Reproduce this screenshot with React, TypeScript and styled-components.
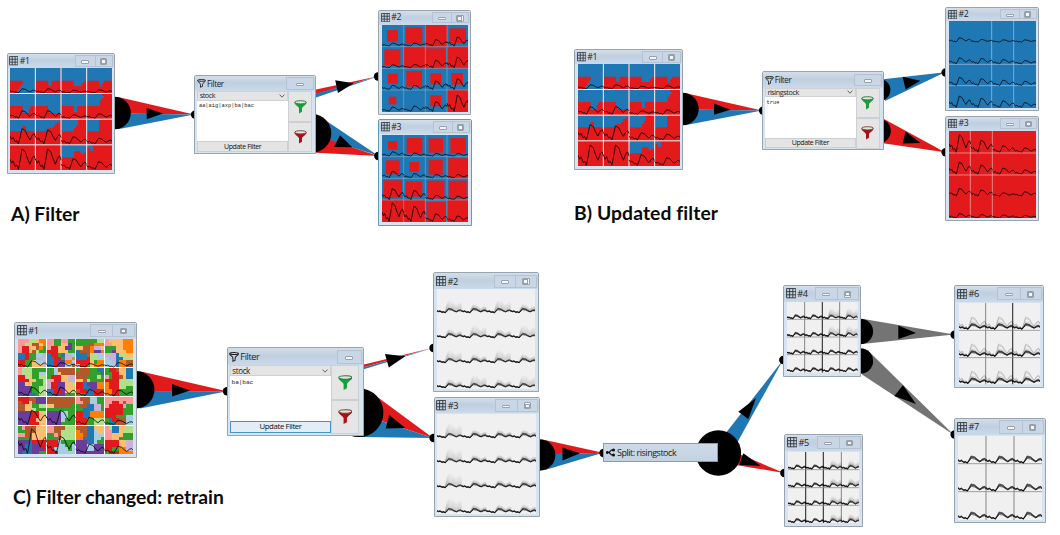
import React from "react";
import styled, { createGlobalStyle } from "styled-components";

const Global = createGlobalStyle`
  body { margin: 0; background: #fff; }
  * { box-sizing: border-box; }
`;

const RED = "#e31a1c";
const BLUE = "#1f78b4";
const GRAY = "#747474";

const Canvas = styled.main`
  position: relative;
  width: 1060px;
  height: 535px;
  overflow: hidden;
  background: #fff;
  font-family: "Open Sans", "Noto Sans", sans-serif;
  color: #222;
`;

const Links = styled.svg`
  position: absolute;
  inset: 0;
`;

const Caption = styled.h2<{ $x: number; $y: number; $ls?: number }>`
  position: absolute;
  left: ${(p) => p.$x}px;
  top: ${(p) => p.$y}px;
  margin: 0;
  font: 700 19.3px/22px Lato, sans-serif;
  letter-spacing: ${(p) => p.$ls ?? 0}px;
  color: #0a0a0a;
  white-space: nowrap;
`;

const Frame = styled.section<{ $x: number; $y: number; $w: number; $h: number; $active?: boolean }>`
  position: absolute;
  left: ${(p) => p.$x}px;
  top: ${(p) => p.$y}px;
  width: ${(p) => p.$w}px;
  height: ${(p) => p.$h}px;
  display: flex;
  flex-direction: column;
  border: 1px solid ${(p) => (p.$active ? "#5d9dbb" : "#9aa4ae")};
  border-radius: 2px 2px 0 0;
  background: #d6e4f1;
`;

const TitleBar = styled.header<{ $h: number }>`
  flex: none;
  height: ${(p) => p.$h}px;
  display: flex;
  align-items: center;
  padding-left: 1.6px;
  background: linear-gradient(#d3dee9, #c0cfdf 45%, #cbdaea);
`;

const Title = styled.span<{ $size: number }>`
  flex: 1;
  margin-left: 1.2px;
  font-size: ${(p) => p.$size}px;
  line-height: 1;
  letter-spacing: -0.4px;
  white-space: nowrap;
`;

const WinButton = styled.span<{ $w: number }>`
  width: ${(p) => p.$w}px;
  height: calc(100% - 2.4px);
  display: flex;
  align-items: center;
  justify-content: center;
  border: 1px solid #b4c2d1;
  border-right-width: 0;
  background: #c8d6e5;
  &:last-child { border-right-width: 1px; margin-right: 1px; }
`;

const MinGlyph = styled.i`
  width: 8px;
  height: 3.4px;
  margin-top: 2px;
  border: 0.8px solid #98a1aa;
  border-radius: 1px;
  background: #f4f7fa;
`;

const MaxGlyph = styled.i`
  width: 7.4px;
  height: 6.8px;
  margin-top: 1px;
  display: flex;
  align-items: center;
  justify-content: center;
  border: 1px solid #98a1aa;
  border-radius: 1px;
  background: #f4f7fa;
  &::after { content: ""; width: 3px; height: 2.6px; border: 1px solid #98a1aa; }
`;

const GridIcon = ({ size = 9 }: { size?: number }) => (
  <svg width={size} height={size} viewBox="0 0 9 9" fill="none" stroke="#30363c" strokeWidth=".8">
    <path d="M.5.5h8v8h-8zM3.1.5v8M5.9.5v8M.5 3.1h8M.5 5.9h8" />
  </svg>
);

type WinProps = {
  x: number; y: number; w: number; h: number; name: string; bar: number; buttons?: [number, number];
  plot: [number, number, number, number]; active?: boolean; children: React.ReactNode;
};

const Plot = styled.svg<{ $ml: number; $mt: number; $w: number; $h: number }>`
  display: block;
  flex: none;
  margin: ${(p) => p.$mt}px 0 0 ${(p) => p.$ml}px;
  width: ${(p) => p.$w}px;
  height: ${(p) => p.$h}px;
`;

/* plot: absolute left, top, width and height of the chart; its viewBox has three units per pixel */
const GridWindow = ({ x, y, w, h, name, bar, buttons = [19, 18], plot, active, children }: WinProps) => (
  <Frame $x={x} $y={y} $w={w} $h={h} $active={active}>
    <TitleBar $h={bar}>
      <GridIcon size={bar > 15 ? 10.4 : 9.4} />
      <Title $size={bar > 15 ? 9.2 : 8.700}>{name}</Title>
      <WinButton $w={buttons[0]}><MinGlyph /></WinButton>
      <WinButton $w={buttons[1]}><MaxGlyph /></WinButton>
    </TitleBar>
    <Plot
      $ml={plot[0] - x - 1}
      $mt={plot[1] - y - 1 - bar}
      $w={plot[2]}
      $h={plot[3]}
      viewBox={`0 0 ${plot[2] * 3} ${plot[3] * 3}`}
    >
      {children}
    </Plot>
  </Frame>
);

const PROFILE: [number, number][] = [
  [0, 0.5], [0.06, 0.3], [0.12, 0.42], [0.2, 0.14], [0.27, 0.2], [0.33, 0], [0.4, 0.45], [0.47, 1],
  [0.6, 0.86], [0.68, 0.55], [0.78, 0.25], [0.88, 0.58], [0.95, 0.66], [1, 0.45],
];

const wave = (x: number, y: number, w: number, h: number, amp: number, peak = 1) =>
  "M" + PROFILE.map(([px, v], i) => {
    const k = i >= 6 ? Math.pow(v, 1 / peak) * peak : v;
    return `${(x + px * w).toFixed(1)} ${(y + h - 2 - k * amp * h).toFixed(1)}`;
  }).join("L");

const Curves = ({ w, h, amps }: { w: number; h: number; amps: number[][] }) => {
  const ch = h / amps.length;
  return (
    <g fill="none" stroke="#000" strokeOpacity=".85" strokeWidth="2.700">
      {amps.map((row, r) => row.map((a, c) => (
        <path key={`${r}-${c}`} d={wave((c * w) / row.length, r * ch, w / row.length, ch, a)} />
      )))}
    </g>
  );
};

const Lines = ({ w, h, xs, ys, color = "#e8eef4", sw = 2 }: { w: number; h: number; xs: number[]; ys: number[]; color?: string; sw?: number }) => (
  <path d={xs.map((x) => `M${x} 0V${h}`).join("") + ys.map((y) => `M0 ${y}H${w}`).join("")} stroke={color} strokeWidth={sw} />
);

const REGIONS = [
  "M0 0H75V75H22V66H28V56H34V48H39V38H0Z",
  "M77 0H152V38H125V54H115V38H77Z",
  "M154 0H229V38H222V46H215V54H191V38H154Z",
  "M231 0H306V38H281V46H275V56H269V38H231Z",
  "M0 78H75V114H61V122H56V136H38V114H0Z",
  "M77 78H152V136H118V124H114V114H77Z",
  "M154 78H229V114H201V132H191V114H154Z",
  "M231 78H277V84H282V90H275V98H269V114H231Z",
  "M0 155H75V190H48V174H38V190H0Z",
  "M77 155H152V158H146V164H136V174H130V180H115V190H77Z",
  "M154 155H204V172H198V180H192V190H154Z",
  "M231 155H267V190H231Z",
  "M154 232H229V254H222V258H212V250H192V268H154Z",
  "M231 232H248V238H250V248H240V240H231Z",
];

const Regions = () => (
  <>
    <rect width="306" height="306" fill={RED} />
    <path d={REGIONS.join("")} fill={BLUE} />
    <Lines w={306} h={306} xs={[76, 153, 230]} ys={[76.5, 153.5, 230.5]} color="#f3f6f9" sw={3} />
    <Curves w={306} h={306} amps={[[0.16, 0.16, 0.1, 0.12], [0.3, 0.3, 0.14, 0.18], [0.6, 0.55, 0.28, 0.22], [0.8, 0.8, 0.42, 0.3]]} />
  </>
);

const Squares = ({ squares, amps }: { squares: number[][]; amps: number[][] }) => (
  <>
    <rect width="261" height="261" fill={BLUE} />
    {squares.map(([x, y, w, h], i) => <rect key={i} x={x} y={y} width={w} height={h} fill={RED} />)}
    <Lines w={261} h={261} xs={[65, 130, 195]} ys={[65, 130, 195]} color="#9fb9d8" sw={1.4} />
    <Curves w={260} h={261} amps={amps} />
  </>
);

const MIX: Record<string, string> = {
  r: "#e31a1c", b: "#1f78b4", g: "#33a02c", l: "#b2df8a", p: "#fb9a99", c: "#a6cee3",
  v: "#6a3d9a", m: "#cab2d6", o: "#ff7f00", y: "#fdbf6f", n: "#b15928",
};

const MOSAIC: string[][] = [
  ["pppllyoo|pplynnyo|prryynog|prrynlgg|bbrggccm|bbrggmmc|rrggyccm|rrggyyym",
   "ppggppgg|ppggyyvg|prryyvvg|rrryyygg|brrgbmmc|bbrrgmmo|bbrvvooc|bbrvvccn",
   "ggggggll|gggnnooo|yynnommy|bnnnovvo|bbbnllcc|bbbrllcc|rrrrygoo|mrrgyooo",
   "pyyyyooo|ppyyyooo|gggyyooo|ggvyyyoo|mmmbllyy|cmmbblll|ccmboonn|cccboonn"],
  ["plllgggg|plllggcc|rrlyggll|rrryyggl|vvyygggl|vvvvggll|vvvvggll|vvvbbgll",
   "ggcnnnnn|ggcynnnn|grrryymm|pprryymm|mrrvvyyl|mrrvvyyy|bbrrvyyl|bbvvvggg",
   "gnnnggbb|nnnngggb|nnnggglg|yynlgggg|rrbvvvoo|rrbbvvoo|nrrbbrrr|nnbbbrrr",
   "grrnyybb|ggrryybb|pgrrnybb|rrrrllll|orrrllll|orrrllgg|oorrgggg|oorrgggg"],
  ["rrrnnvvv|nrrynvvv|nnyyggll|nnyylggg|vvvvrryl|vvvvrryy|vvvrryyy|vvvrrryy",
   "nnnnnnnn|nnnnnnnn|yynnnnng|gggggggg|vvvvccgg|vvvvccgg|vvvvcggg|vvvvgggg",
   "pnnnccgg|ppnnccgg|gnnbbmmg|ggbbbmmg|rrbboooo|rrbboooo|rrrgglll|rrrgglll",
   "pppppppp|pprrpnpp|prrrrmgg|rrrrrggg|rrrrrggg|rrrgggcc|gbrrnncc|gbbnnncc"],
  ["gpnnnyyy|ggnnnyyy|ppnnyyyy|gggnyyyy|vvvbrrrr|vvbbvvrr|vvbbvvvr|vbbbvvgg",
   "ppnnnlll|ppnnllll|ggpnllll|gggnllll|rrrcgggg|rrrccggc|rrccccgc|rrrccccc",
   "nnnbbyyy|onnbbcyy|oonbbccc|oobbbccg|vvvbbcgg|vvvccvvv|vvvccvvv|vvvvvvvv",
   "plbbyyll|ppbbylll|ppyyyggg|ppyygggg|rrrryymm|rrrryymm|rrggoomm|grrroooo"],
];

const Mosaic = () => {
  const s = 84 / 8;
  return (
    <>
      <rect width="345" height="345" fill="#fff" />
      <g shapeRendering="crispEdges">
        {MOSAIC.map((row, r) => row.map((cell, c) => cell.split("|").map((line, j) => line.split("").map((k, i) => (
          <rect key={`${r}${c}${j}${i}`} x={c * 87 + i * s} y={r * 87 + j * s} width={s + 0.4} height={s + 0.4} fill={MIX[k]} />
        )))))}
      </g>
      <Curves w={345} h={345} amps={[[0.22, 0.16, 0.12, 0.16], [0.3, 0.3, 0.22, 0.2], [0.5, 0.5, 0.25, 0.15], [0.85, 0.6, 0.32, 0.25]]} />
    </>
  );
};

type DensityProps = {
  w: number; h: number; cols: number; rows: number; xs: number[]; ys: number[];
  amp: number; base: number; haze: (r: number, c: number) => number; dark?: number[]; outliers?: number[];
};

const Density = ({ w, h, cols, rows, xs, ys, amp, base, haze, dark = [], outliers = [] }: DensityProps) => {
  const cw = w / cols;
  const ch = h / rows;
  const out: React.ReactNode[] = [];
  for (let r = 0; r < rows; r++) {
    for (let c = 0; c < cols; c++) {
      const hz = haze(r, c);
      for (let k = 1; k <= 8; k++) {
        out.push(
          <path key={`h${r}-${c}-${k}`} d={wave(c * cw, r * ch, cw, ch - base, amp * (1 + k * 0.03), 1 + k * 0.16 * hz)}
            strokeOpacity={0.1 - k * 0.009} strokeWidth="4" />,
        );
      }
      outliers.forEach((k) => out.push(
        <path key={`o${r}-${c}-${k}`} d={wave(c * cw, r * ch, cw, ch - base, amp * k)} strokeOpacity=".2" strokeWidth="2.2" />,
      ));
      [0.8, 1, 1.2].forEach((k) => out.push(
        <path key={`m${r}-${c}-${k}`} d={wave(c * cw, r * ch, cw, ch - base, amp * k)} strokeOpacity=".62" strokeWidth="2.700" />,
      ));
    }
  }
  return (
    <>
      <rect width={w} height={h} fill="#f0f0f0" />
      <Lines w={w} h={h} xs={xs} ys={[]} color="#858585" sw={3} />
      <Lines w={w} h={h} xs={dark} ys={[]} color="#333" sw={3.4} />
      <Lines w={w} h={h} xs={[]} ys={ys} color="#8b8b8b" sw={2.4} />
      <g fill="none" stroke="#000" strokeLinejoin="round">{out}</g>
    </>
  );
};

/* filter node: every measure is multiplied by the node's scale s */
const FilterBody = styled.div<{ $s: number }>`
  flex: 1;
  min-height: 0;
  display: grid;
  grid-template-columns: ${(p) => 90.7 * p.$s}px ${(p) => 24.4 * p.$s}px;
  padding: 0 0 0 ${(p) => 2 * p.$s}px;
`;

const Fields = styled.div<{ $s: number }>`
  display: flex;
  flex-direction: column;
  height: ${(p) => 60.6 * p.$s}px;
`;

const Combo = styled.div<{ $s: number }>`
  height: ${(p) => 9.6 * p.$s}px;
  display: flex;
  align-items: center;
  justify-content: space-between;
  padding: 0 ${(p) => 2 * p.$s}px 0 ${(p) => 1.4 * p.$s}px;
  border: 0.8px solid #cfd1d3;
  background: #e4e4e4;
  font-size: ${(p) => 7.2 * p.$s}px;
  line-height: 1;
  letter-spacing: -0.4px;
`;

const Query = styled.div<{ $s: number }>`
  flex: 1;
  padding: ${(p) => 3.6 * p.$s}px ${(p) => 1.6 * p.$s}px;
  background: #fff;
  font: ${(p) => 5.4 * p.$s}px/1 "Liberation Mono", monospace;
  color: #222;
`;

const UpdateButton = styled.button<{ $s: number; $focus?: boolean }>`
  height: ${(p) => 10.6 * p.$s}px;
  margin: 0;
  padding: 0;
  border: ${(p) => (p.$focus ? "1.4px solid #4a93c9" : "1px solid #cccfd2")};
  background: ${(p) => (p.$focus ? "#e3edf6" : "#e4e4e4")};
  font: ${(p) => 7 * p.$s}px/1 "Open Sans", sans-serif;
  letter-spacing: -0.38px;
  color: #111;
`;

const FunnelColumn = styled.div<{ $s: number }>`
  display: flex;
  flex-direction: column;
  height: ${(p) => 61 * p.$s}px;
`;

const FunnelButton = styled.div`
  flex: 1;
  display: flex;
  align-items: center;
  justify-content: center;
  border: 1px solid #cdd0d3;
  background: #e5e5e5;
`;

const Funnel = ({ color, dark, s }: { color: string; dark: string; s: number }) => (
  <svg width={13 * s} height={14 * s} viewBox="0 0 13 14">
    <path d="M.4 2.4C.4 4.6 4.2 6 5 8v5.4l3-1.6V8c.8-2 4.6-3.400 4.600-5.600z" fill={color} />
    <ellipse cx="6.500" cy="2.300" rx="5.800" ry="1.600" fill="#dfe6df" stroke={dark} strokeWidth=".9" />
  </svg>
);

const FunnelOutline = ({ s }: { s: number }) => (
  <svg width={9 * s} height={9 * s} viewBox="0 0 9 9" fill="none" stroke="#222" strokeWidth=".9">
    <path d="M.6 1.500C.6 3 3.500 4 3.500 5.300v3l2-1V5.300C5.500 4 8.400 3 8.400 1.500" />
    <ellipse cx="4.500" cy="1.400" rx="3.900" ry=".9" />
  </svg>
);

const Chevron = () => (
  <svg width="6" height="4" viewBox="0 0 6 4" fill="none" stroke="#555" strokeWidth=".9"><path d="M.6.6 3 3.200 5.400.6" /></svg>
);

const FilterWindow = ({ x, y, w, h, s, field, query, focus }: {
  x: number; y: number; w: number; h: number; s: number; field: string; query: string; focus?: boolean;
}) => (
  <Frame $x={x} $y={y} $w={w} $h={h}>
    <TitleBar $h={15.3 * s}>
      <FunnelOutline s={s} />
      <Title $size={8.1 * s}>Filter</Title>
      <WinButton $w={28 * (s > 1 ? 0.87 : 1)}><MinGlyph /></WinButton>
    </TitleBar>
    <FilterBody $s={s}>
      <Fields $s={s}>
        <Combo $s={s}>{field}<Chevron /></Combo>
        <Query $s={s}>{query}</Query>
        <UpdateButton $s={s} $focus={focus}>Update Filter</UpdateButton>
      </Fields>
      <FunnelColumn $s={s}>
        <FunnelButton><Funnel color="#16a03c" dark="#27703b" s={s} /></FunnelButton>
        <FunnelButton><Funnel color="#a81216" dark="#7a3a33" s={s} /></FunnelButton>
      </FunnelColumn>
    </FilterBody>
  </Frame>
);

const SplitNode = styled.div`
  position: absolute;
  left: 603px;
  top: 443px;
  width: 115px;
  height: 19px;
  display: flex;
  align-items: center;
  gap: 2px;
  padding-left: 2px;
  border: 1px solid #8f9aa5;
  background: linear-gradient(#cddae7, #c3d2e2);
  font-size: 9px;
  line-height: 1;
  letter-spacing: -0.48px;
`;

const FLOWS: [string, string][] = [
  ["118,97 194,114.600 115,113.600", RED],
  ["115,113.600 194,114.600 118,129.300", BLUE],
  ["316,89.500 378,76.300 316,94", RED],
  ["316,93.500 378,76.500 316,97.500", BLUE],
  ["322,118 378,155.500 316,136", BLUE],
  ["316,135 378,156 316,152.700", RED],
  ["685,93 762,110.600 683,109.600", RED],
  ["683,109.600 762,110.600 685,125.300", BLUE],
  ["883,79.200 945,72.300 885,101", BLUE],
  ["884,119 945,152.300 883,143.300", RED],
  ["140,371.300 227,391.200 136,391", RED],
  ["136,391 227,391.200 140,408.500", BLUE],
  ["363,364.800 433,347.700 363,367.500", RED],
  ["363,367.500 433,348 363,369.500", BLUE],
  ["372,393 433,438 360,414", RED],
  ["360,414 433,438 362,437", BLUE],
  ["545,440 603,452.800 540,454.500", RED],
  ["540,454.500 603,452.800 545,470", BLUE],
  ["718,443 783,360 737,443", BLUE],
  ["730,450 784,473 730,464", RED],
  ["862,318.700 954,334.600 862,344", GRAY],
  ["868,350.500 954,435 862,374.500", GRAY],
];

const HUBS: [number, number, number][] = [
  [114.500, 113, 16.300], [312, 133.300, 19.300], [682.400, 109, 16.300], [879.500, 90, 10.900], [878.500, 131, 12.300],
  [135.800, 389.700, 18.700], [359, 412.700, 24.400], [539.700, 455, 15.700], [718.400, 453, 22.700],
  [860.400, 331.500, 12.700], [860.400, 361, 12.700],
];

const PORTS: [number, number][] = [
  [195, 114.600], [378, 76.500], [378.300, 156], [763, 110.600], [945.600, 72.500], [945.600, 152.300],
  [227, 391.200], [433.500, 348], [433.500, 438], [603.500, 453], [783.300, 360], [784.300, 473], [954.600, 334.700], [954.600, 434.500],
];

const ARROWS = [
  "146.700,108 146.700,119.300 163,113.500", "335.200,80.300 353.600,83.300 338,93", "340,135.300 352.300,147.300 334,147",
  "714,103.500 714,114.800 730.300,109.700", "902.600,76.700 920.300,80.700 905.600,89.500", "905.600,131.500 920.500,143 902.600,143.500",
  "172,384 172,396.600 190,390.500", "385,354 405.300,356.300 388.800,367.500", "389.300,415 405.300,428 385.600,428.400",
  "562.500,447.500 562.500,460.500 580,453.300", "756,398 748.300,419 738.300,411.700", "743.300,453.300 760.700,465.700 739.300,465",
  "898.300,325.500 898.300,339 916,333", "903,385.300 916,404 894.300,396",
];

const A2 = [
  [15, 15, 33, 34], [71, 7, 50, 50], [130, 0, 65, 65], [202, 10, 50, 45], [7, 73, 48, 48], [65, 65, 65, 65], [132, 70, 60, 60],
  [195, 65, 66, 65], [17, 146, 30, 30], [73, 138, 47, 47], [145, 145, 33, 33], [208, 144, 35, 35], [20, 215, 23, 23], [145, 211, 33, 33], [195, 195, 66, 66],
];
const A3 = [
  [18, 18, 28, 26], [74, 9, 47, 46], [140, 10, 43, 43], [205, 9, 46, 46], [11, 76, 42, 42], [82, 81, 29, 29], [140, 74, 42, 45],
  [199, 70, 60, 60], [5, 136, 55, 52], [71, 139, 50, 46], [136, 137, 51, 54], [200, 137, 54, 53], [0, 195, 65, 66], [65, 195, 65, 66],
  [134, 201, 58, 60], [195, 195, 66, 66],
];

export default function App() {
  return (
    <>
      <Global />
      <Canvas>
        <Links width="1060" height="535" viewBox="0 0 1060 535">
          {FLOWS.map(([points, fill], i) => <polygon key={i} points={points} fill={fill} />)}
          {HUBS.map(([cx, cy, r], i) => <circle key={i} cx={cx} cy={cy} r={r} />)}
          {PORTS.map(([cx, cy], i) => <circle key={i} cx={cx} cy={cy} r="4.200" />)}
          {ARROWS.map((points, i) => <polygon key={i} points={points} />)}
        </Links>

        <GridWindow x={6.500} y={53} w={108.500} h={120.500} name="#1" bar={14} buttons={[20, 18.500]} plot={[10, 68, 102, 102]}><Regions /></GridWindow>
        <FilterWindow x={194.300} y={75} w={122} h={79} s={1} field="stock" query="aa|aig|axp|ba|bac" />
        <GridWindow x={378} y={10} w={93} h={105} name="#2" bar={13.500} plot={[381.600, 25, 86.500, 86.500]}>
          <Squares squares={A2} amps={[[0.14, 0.14, 0.3, 0.42], [0.14, 0.16, 0.35, 0.5], [0.2, 0.2, 0.4, 0.5], [0.2, 0.25, 0.45, 0.75]]} />
        </GridWindow>
        <GridWindow x={378} y={119} w={93.500} h={107} name="#3" bar={14} active plot={[381.600, 135, 86.500, 87]}>
          <Squares squares={A3} amps={[[0.2, 0.14, 0.12, 0.12], [0.3, 0.2, 0.15, 0.15], [0.5, 0.42, 0.2, 0.16], [0.85, 0.7, 0.35, 0.25]]} />
        </GridWindow>

        <GridWindow x={574} y={49} w={108.800} h={120.800} name="#1" bar={14} buttons={[20, 18.500]} plot={[577.500, 64, 102, 102]}><Regions /></GridWindow>
        <FilterWindow x={762} y={71.400} w={121.500} h={79} s={1} field="risingstock" query="true" />
        <GridWindow x={945.300} y={7} w={93.300} h={103.600} name="#2" bar={12.500} plot={[949, 21, 87, 87]}>
          <rect width="261" height="261" fill={BLUE} />
          <Lines w={261} h={261} xs={[128, 194]} ys={[130, 194]} color="#a9c6e0" />
          <Curves w={261} h={261} amps={[[0.2, 0.12, 0.1, 0.1], [0.28, 0.25, 0.2, 0.15], [0.38, 0.32, 0.25, 0.2], [0.52, 0.42, 0.3, 0.22]]} />
        </GridWindow>
        <GridWindow x={945.300} y={115.600} w={94} h={105.600} name="#3" bar={14} plot={[949, 130.600, 87, 87.600]}>
          <rect width="261" height="263" fill={RED} />
          <Lines w={261} h={263} xs={[64, 130]} ys={[66, 132]} color="#f3b5b6" />
          <Curves w={261} h={263} amps={[[0.8, 0.55, 0.3, 0.2], [0.55, 0.42, 0.28, 0.2], [0.35, 0.28, 0.15, 0.2], [0.2, 0.16, 0.14, 0.12]]} />
        </GridWindow>

        <GridWindow x={14} y={321.600} w={122.500} h={136.400} name="#1" bar={16} buttons={[22, 22.500]} plot={[17.600, 339, 115, 115]}><Mosaic /></GridWindow>
        <FilterWindow x={226.500} y={347.300} w={137} h={88.700} s={1.120} field="stock" query="ba|bac" focus />
        <GridWindow x={433.300} y={272.400} w={105.400} h={119.300} name="#2" bar={15.500} buttons={[21, 21.500]} plot={[437, 289, 98.500, 100]}>
          <Density w={295.500} h={300} cols={4} rows={4} xs={[]} ys={[]} amp={0.15} base={2} haze={(r, c) => (r + c) % 2 ? 0.6 : 1.200} />
        </GridWindow>
        <GridWindow x={433.500} y={396.600} w={106.500} h={120.400} name="#3" bar={15.500} buttons={[21.500, 21.500]} plot={[437, 414, 99, 100]}>
          <Density w={297} h={300} cols={4} rows={4} xs={[]} ys={[]} amp={0.15} base={2} haze={(r, c) => (c ? 0.5 : 1.500)} />
        </GridWindow>
        <SplitNode>
          <svg width="9" height="9" viewBox="0 0 9 9" fill="none" stroke="#111" strokeWidth="1.200">
            <path d="M1 4.500h2L5.500 2H8M3 4.500 5.500 7H8" />
            <circle cx="1.300" cy="4.500" r=".8" fill="#111" /><circle cx="7.500" cy="2" r=".9" fill="#111" /><circle cx="7.500" cy="7" r=".9" fill="#111" />
          </svg>
          Split: risingstock
        </SplitNode>
        <GridWindow x={783} y={284.700} w={77.500} h={92.500} name="#4" bar={16} buttons={[22, 22]} plot={[787, 302.500, 70.500, 70.500]}>
          <Density w={211.500} h={211.500} cols={4} rows={4} xs={[53, 158]} dark={[106]} ys={[52, 105, 158]} amp={0.18} base={1} haze={(r, c) => (c > 1 && r < 2 ? 1.200 : 0.1)} />
        </GridWindow>
        <GridWindow x={784.300} y={433.500} w={78.500} h={93} name="#5" bar={16} buttons={[22, 22]} plot={[788, 451.500, 71.500, 71.500]}>
          <Density w={214.500} h={214.500} cols={4} rows={4} xs={[160]} dark={[53, 106]} ys={[53, 107, 160]} amp={0.18} base={1} haze={(r, c) => (c > 1 ? 0.8 : 0.1)} />
        </GridWindow>
        <GridWindow x={954.300} y={285} w={89.500} h={103} name="#6" bar={15.500} buttons={[23, 22]} plot={[959, 303, 81, 81.500]}>
          <Density w={243} h={244} cols={3} rows={3} xs={[80]} dark={[161]} ys={[82, 164]} amp={0.17} base={1} haze={() => 0} outliers={[1.600, 2.400, 2.700]} />
        </GridWindow>
        <GridWindow x={954.300} y={418} w={91.500} h={105} name="#7" bar={16} buttons={[23, 22]} plot={[958, 436, 84, 84]}>
          <Density w={252} h={252} cols={3} rows={3} xs={[84, 168]} ys={[83, 167]} amp={0.21} base={1} haze={() => 0} />
        </GridWindow>

        <Caption $x={11} $y={203}>A) Filter</Caption>
        <Caption $x={574} $y={202} $ls={0.1}>B) Updated filter</Caption>
        <Caption $x={13} $y={486}>C) Filter changed: retrain</Caption>
      </Canvas>
    </>
  );
}
